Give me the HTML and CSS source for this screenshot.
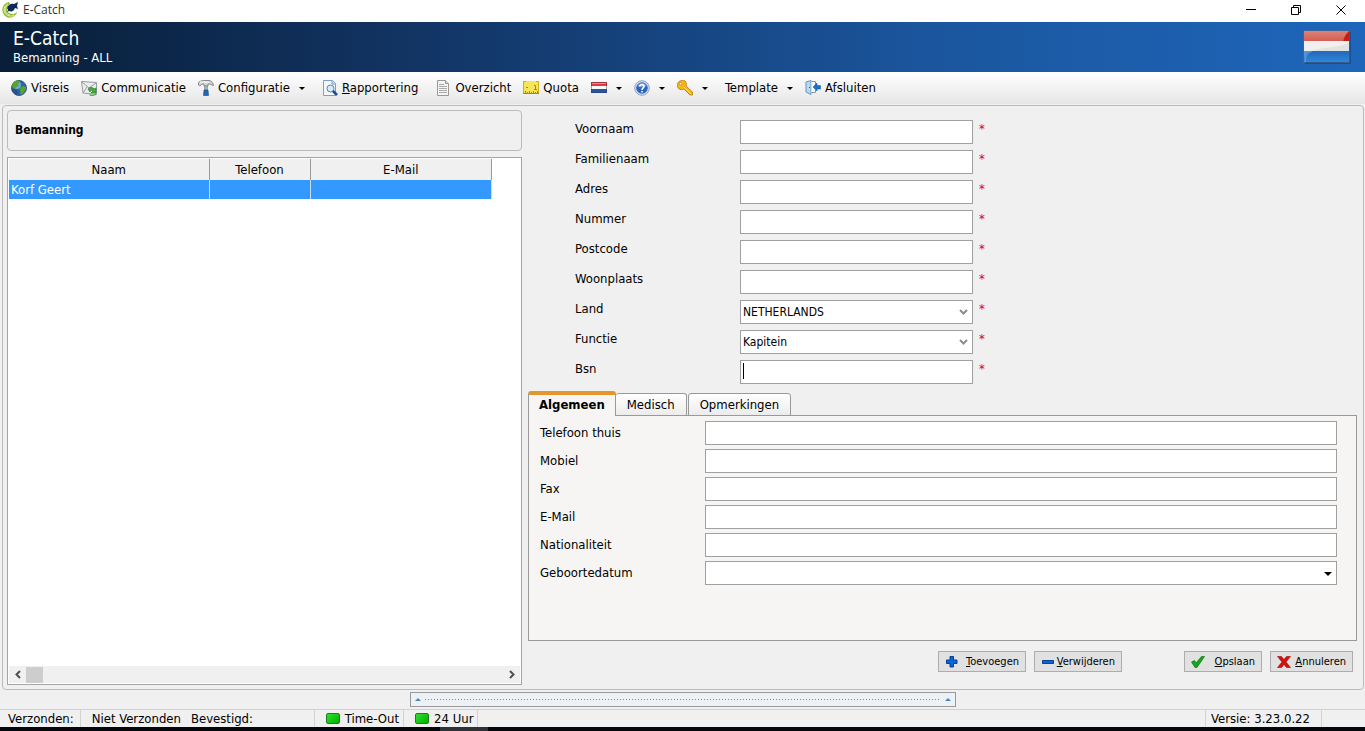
FILE: index.html
```
<!DOCTYPE html>
<html lang="nl">
<head>
<meta charset="utf-8">
<meta name="viewport" content="width=device-width, initial-scale=1">
<title>E-Catch</title>
<link rel="stylesheet" href="styles.css">
</head>
<body>
<div class="titlebar">
  <svg class="icon" viewBox="0 0 16 16"><path d="M7 0C2 1-1 6 1 11c2 5 8 6 11 3 2-1 3-3 3-4-2 2-5 3-8 1S4 4 8 2z" fill="#8dbb27"/><path d="M6 2C2 4 1 8 3 11c2 3 6 4 9 2M5 3C1 8 4 12 8 13" fill="none" stroke="#e8f2b8"/><path d="M5 6c1-3 4-5 7-4l4-2-1 4 1 3-3-1c-1 3-3 4-6 3L5 10l1-2z" fill="#10295c"/></svg>
  <span class="titlebar-text">E-Catch</span>
  <div class="window-buttons">
    <button aria-label="Minimaliseren"><svg viewBox="0 0 11 11"><path d="M0 4.500h10" /></svg></button>
    <button aria-label="Verkleinen"><svg viewBox="0 0 11 11"><path d="M.5 2.500h7v7H.5zM2.500 2.500V.5h7v7H7.500"/></svg></button>
    <button aria-label="Sluiten"><svg viewBox="0 0 11 11"><path d="M.5.5l9 9M9.500.5l-9 9"/></svg></button>
  </div>
</div>

<header class="banner">
  <div>
    <h1>E-Catch</h1>
    <p>Bemanning - ALL</p>
  </div>
  <svg class="banner-flag" viewBox="0 0 48 34">
    <defs>
      <linearGradient id="red" x2="0" y2="1"><stop stop-color="#dc8278"/><stop offset="1" stop-color="#d45a4e"/></linearGradient>
      <linearGradient id="blue" x2="0" y2="1"><stop stop-color="#2468b8"/><stop offset="1" stop-color="#2e86dd"/></linearGradient>
    </defs>
    <path d="M2 2h46v32H2z" fill="#123f7c" opacity=".6"/>
    <path d="M1 1h45v11H1z" fill="url(#red)"/><path d="M46 1v11h-6c1-5 3-8 6-11z" fill="#c5200f"/>
    <path d="M1 11h45v11H1z" fill="#f0f0f0"/><path d="M6 22c12-6 28-3 40-9v9z" fill="#e2e2e2"/>
    <path d="M1 21h45v11H1z" fill="url(#blue)"/><path d="M1 32c0-5 2-9 7-11H1z" fill="#5a94d0"/><path d="M2 32c0-5 2-9 7-11" fill="none" stroke="#86b8e8" stroke-width=".7"/>
    <path d="M.5.5h46v32H.5z" fill="none" stroke="#54687f" opacity=".5"/>
  </svg>
</header>

<nav class="toolbar">
  <button class="tool"><svg class="icon" viewBox="0 0 16 16"><circle cx="8" cy="8" r="7.500" fill="#2c63ad" stroke="#315887"/><circle cx="6" cy="5" r="4" fill="#70a7df"/><path d="M4 1c3-1 5 0 5 1L7 4l1 2-3 1-1 2-3-2C1 4 2 2 4 1zM9 8l3-2 3 1c0 4-2 6-5 8-1-1 0-3-1-4z" fill="#58a32b"/><path d="M3 9l3 1 1 3-1 2C4 14 2 12 1 9z" fill="#254f8f"/></svg>Visreis</button>
  <button class="tool"><svg class="icon" viewBox="0 0 16 16"><path d="M.5 1.500l15 1v12L2 13z" fill="#eceded" stroke="#989c9e"/><path d="M1 2l7 6 7-5M2 13l4-6M15 14L9 7" fill="none" stroke="#999da0"/><path d="M7 9c2-2 5-2 6 0l2-1v5h-5l2-2c-1-1-2-1-3 1z" fill="#45aa36" stroke="#247923" stroke-width=".6"/><path d="M8 13c2 3 5 2 7 0v2l-3 1H9z" fill="#50b23e"/></svg>Communicatie</button>
  <button class="tool"><svg class="icon" viewBox="0 0 16 16"><path d="M.5 2.500C3 0 7 .5 11 .5c2 0 4 2 4.500 5L12 4h-2v2H6V4H4L2 6 .5 5z" fill="#d5d8da" stroke="#84898c"/><path d="M2 2h9" stroke="#fff"/><path d="M6.500 6h3v5h-3z" fill="#a9afb3" stroke="#777e82" stroke-width=".5"/><path d="M6 10h4l.5 5.500h-5z" fill="#2268b5" stroke="#15447d" stroke-width=".6"/></svg>Configuratie<i class="arrow"></i></button>
  <button class="tool group-start"><svg class="icon" viewBox="0 0 16 16"><path d="M1.500.5h9l3 3v12h-12z" fill="#f4f8fc" stroke="#7c9fc4"/><path d="M10 .5v3.500h3.500" fill="#cedeef" stroke="#7c9fc4"/><circle cx="8.500" cy="8.500" r="3.500" fill="#d4edf7" stroke="#5b84a8"/><path d="M11 11l4 4" stroke="#18499a" stroke-width="2.500"/></svg><span><u>R</u>apportering</span></button>
  <button class="tool group-start"><svg class="icon" viewBox="0 0 16 16"><path d="M2.500.5h8l3 3v12h-11z" fill="#f5f5f5" stroke="#999"/><path d="M10.500.5v3h3" fill="#ddd" stroke="#999"/><path d="M4 4.500h5M4 6.500h8M4 8.500h8M4 10.500h8M4 12.500h8" stroke="#aaa"/></svg>Overzicht</button>
  <button class="tool"><svg class="icon" viewBox="0 0 16 16"><path d="M0 1h16v13H0z" fill="#f6e657"/><path d="M.5 1v13M15.500 1v13M0 1.500h3M13 1.500h3" stroke="#d1ad1d"/><path d="M0 13.500h16M2.500 11v3M4.500 12v2M6.500 11v3M8.500 12v2M10.500 11v3M12.500 12v2M14.500 11v3M3 7.500h2M11 5.500h1.500V9M11 9.500h3" fill="none" stroke="#a98a13"/></svg>Quota</button>
  <button class="tool" aria-label="Taal"><svg class="icon" viewBox="0 0 16 16"><path d="M0 2h16v4H0z" fill="#e5383c"/><path d="M1 3h14v1H1z" fill="#f28385"/><path d="M0 6h16v4H0z" fill="#f7f7f7"/><path d="M0 9h16v4H0z" fill="#2456a5"/><path d="M.5 2.500h15v10H.5z" fill="none" stroke="#3c3657" opacity=".45"/></svg><i class="arrow"></i></button>
  <button class="tool" aria-label="Help"><svg class="icon" viewBox="0 0 16 16"><circle cx="8" cy="8" r="7.300" fill="#d9e3f1" stroke="#8ba0bf"/><circle cx="8" cy="8" r="5.800" fill="#2e63be"/><path d="M3 6c2-4 8-4 10 0-3 1-6 2-10 0z" fill="#6c97dd"/><path d="M5.500 6.500C6 4 10 4 10 6.500 10 8 8 8 8 10M8 11v1.600" fill="none" stroke="#fff" stroke-width="1.600"/></svg><i class="arrow"></i></button>
  <button class="tool" aria-label="Sleutel"><svg class="icon" viewBox="0 0 16 16"><path d="M3 1C0 2 0 6 1 8c2 2 4 2 6 1l6 6h2.500v-3L9 6c1-2 0-4-1-5-2-1-3-1-5 0z" fill="#f6b51d" stroke="#bc7b0b" stroke-width=".8"/><circle cx="3.700" cy="3.700" r="1.300" fill="#fff" stroke="#b87a0e" stroke-width=".7"/><path d="M7 7l7 7" stroke="#fee184"/><path d="M9 11l1 1M11 13l1 1" stroke="#b87a0e"/></svg><i class="arrow"></i></button>
  <button class="tool group-start">Template<i class="arrow"></i></button>
  <button class="tool"><svg class="icon" viewBox="0 0 16 16"><path d="M1 2l5-1.500v14L1 12z" fill="#b9d8f2" stroke="#6797c2"/><path d="M6.500 1.500h4v11h-4" fill="#f7f9fb" stroke="#8296aa"/><path d="M4 7.500h1" stroke="#315e8c"/><path d="M8 7l4-4v2.500h3.500v3.500H12V11z" fill="#1672d2" stroke="#0f529f" stroke-width=".5"/></svg>Afsluiten</button>
</nav>

<main class="workspace">
  <section class="crew">
    <div class="crew-title"><h2>Bemanning</h2></div>
    <div class="crew-list">
      <table>
        <colgroup><col class="col-name"><col class="col-phone"><col class="col-mail"></colgroup>
        <thead><tr><th>Naam</th><th>Telefoon</th><th>E-Mail</th></tr></thead>
        <tbody><tr><td>Korf Geert</td><td></td><td></td></tr></tbody>
      </table>
      <div class="scrollbar">
        <button aria-label="Naar links"><svg viewBox="0 0 8 9"><path d="M6 1L2.500 4.500 6 8"/></svg></button>
        <div class="scroll-track"><div class="scroll-thumb"></div></div>
        <button aria-label="Naar rechts"><svg viewBox="0 0 8 9"><path d="M2 1l3.500 3.500L2 8"/></svg></button>
      </div>
    </div>
  </section>

  <form class="details">
    <div class="person">
      <div class="person-row"><label for="voornaam">Voornaam</label><input id="voornaam" type="text"><span class="required">*</span></div>
      <div class="person-row"><label for="familienaam">Familienaam</label><input id="familienaam" type="text"><span class="required">*</span></div>
      <div class="person-row"><label for="adres">Adres</label><input id="adres" type="text"><span class="required">*</span></div>
      <div class="person-row"><label for="nummer">Nummer</label><input id="nummer" type="text"><span class="required">*</span></div>
      <div class="person-row"><label for="postcode">Postcode</label><input id="postcode" type="text"><span class="required">*</span></div>
      <div class="person-row"><label for="woonplaats">Woonplaats</label><input id="woonplaats" type="text"><span class="required">*</span></div>
      <div class="person-row"><label for="land">Land</label><div class="combo"><select id="land"><option>NETHERLANDS</option></select><svg viewBox="0 0 9 6"><path d="M1 1l3.500 3.500L8 1"/></svg></div><span class="required">*</span></div>
      <div class="person-row"><label for="functie">Functie</label><div class="combo"><select id="functie"><option>Kapitein</option></select><svg viewBox="0 0 9 6"><path d="M1 1l3.500 3.500L8 1"/></svg></div><span class="required">*</span></div>
      <div class="person-row"><label for="bsn">Bsn</label><div class="combo caret"><input id="bsn" type="text"></div><span class="required">*</span></div>
    </div>

    <div class="tabs" role="tablist">
      <button type="button" class="tab active" role="tab" aria-selected="true">Algemeen</button>
      <button type="button" class="tab" role="tab">Medisch</button>
      <button type="button" class="tab" role="tab">Opmerkingen</button>
    </div>
    <div class="tab-panel" role="tabpanel">
      <label for="telefoon">Telefoon thuis</label><input id="telefoon" type="text">
      <label for="mobiel">Mobiel</label><input id="mobiel" type="text">
      <label for="fax">Fax</label><input id="fax" type="text">
      <label for="email">E-Mail</label><input id="email" type="text">
      <label for="nationaliteit">Nationaliteit</label><input id="nationaliteit" type="text">
      <label for="geboortedatum">Geboortedatum</label><div class="combo date"><select id="geboortedatum"><option></option></select><i class="arrow"></i></div>
    </div>

    <div class="actions">
      <button type="button" class="action wide"><svg viewBox="0 0 14 14"><path d="M5 1.500h3.500V5H12v3.500H8.500V12H5V8.500H1.500V5H5z" fill="#0866d8" stroke="#083f91"/></svg><span><u>T</u>oevoegen</span></button>
      <button type="button" class="action wide"><svg viewBox="0 0 14 14"><path d="M1.500 5.500h11v3h-11z" fill="#0866d8" stroke="#083f91"/></svg><span><u>V</u>erwijderen</span></button>
      <button type="button" class="action commit"><svg viewBox="0 0 14 14"><path d="M.5 7l3-1.500L5 8l5.500-6.500h3L6 12.500H4z" fill="#13a51a" stroke="#087711" stroke-width=".7"/></svg><span><u>O</u>pslaan</span></button>
      <button type="button" class="action"><svg viewBox="0 0 14 14"><path d="M.5 1.500h4L7 4.500l2.500-3h4L9 7l4.500 5.500h-4L7 9.500l-2.500 3h-4L5 7z" fill="#d5100d" stroke="#9d0907" stroke-width=".6"/></svg><span><u>A</u>nnuleren</span></button>
    </div>
  </form>
</main>

<div class="splitter-row"><div class="splitter"><i></i><span></span><i></i></div></div>

<footer class="status">
  <span class="cell">Verzonden:</span>
  <span class="cell sent"><span>Niet Verzonden</span><span>Bevestigd:</span></span>
  <span class="cell led">Time-Out</span>
  <span class="cell led">24 Uur</span>
  <span class="cell version">Versie: 3.23.0.22</span>
</footer>
<div class="taskbar"><div class="taskbar-item"></div></div>
</body>
</html>
```
FILE: styles.css
```
* { box-sizing: border-box; }

body {
  margin: 0;
  min-height: 100vh;
  display: flex;
  flex-direction: column;
  background: #f0f0f0;
  color: #000;
  font: 13px/18px "DejaVu Sans Condensed", "Noto Sans", sans-serif;
}

button, input, select { font: inherit; color: inherit; margin: 0; }
button { border: 0; background: none; padding: 0; }
h1, h2, p { margin: 0; }
.icon { width: 16px; height: 16px; flex: none; }
.arrow {
  width: 0;
  height: 0;
  border: 3px solid transparent;
  border-top: 3px solid #000;
  border-bottom: 0;
}

.titlebar {
  height: 22px;
  display: flex;
  align-items: center;
  padding: 0 18px 2px 2px;
  gap: 5px;
  background: #fff;
  flex: none;
}
.titlebar-text { font: 12px/16px "Open Sans", sans-serif; color: #333; }
.window-buttons { display: flex; gap: 34px; margin-left: auto; }
.window-buttons button { display: flex; }
.window-buttons svg { width: 11px; height: 11px; fill: none; stroke: #000; }

.banner {
  height: 50px;
  flex: none;
  display: flex;
  align-items: center;
  justify-content: space-between;
  padding: 0 14px 0 13px;
  color: #fff;
  background: linear-gradient(90deg, #081e38, #123463 30%, #1b57a0 70%, #1e66ba);
}
.banner h1 { font-size: 19px; line-height: 22px; font-weight: 400; }
.banner p { font-size: 13px; line-height: 18px; }
.banner-flag { width: 48px; height: 34px; }

.toolbar {
  height: 32px;
  flex: none;
  display: flex;
  align-items: center;
  gap: 12px;
  padding: 0 11px;
  background: linear-gradient(#fff, #e6e6e6);
}
.tool { display: flex; align-items: center; gap: 4px; white-space: nowrap; }
.tool .arrow { margin-left: 5px; }
.group-start { margin-left: 5px; }

.workspace {
  flex: 1;
  display: grid;
  grid-template-columns: minmax(0, 515fr) minmax(0, 829fr);
  gap: 6px;
  margin: 1px 1px 0 2px;
  padding: 4px 6px 4px 4px;
  border: 1px solid #bbb;
  border-radius: 4px;
}

.crew { display: flex; flex-direction: column; gap: 6px; }
.crew-title { padding: 10px 7px; border: 1px solid #bbb; border-radius: 4px; }
.crew-title h2 { font-size: 12px; line-height: 19px; }
.crew-list {
  flex: 1;
  display: flex;
  flex-direction: column;
  justify-content: space-between;
  padding: 1px;
  border: 1px solid #a5a5a5;
  background: #fff;
}
.crew-list table { width: 483px; table-layout: fixed; border-collapse: collapse; }
.col-name { width: 200px; }
.col-phone { width: 101px; }
.crew-list th {
  height: 21px;
  padding: 0;
  background: #f0f0f0;
  border-right: 1px solid #999;
  font-weight: 400;
}
.crew-list td {
  height: 19px;
  padding: 0 2px;
  background: #3399ff;
  color: #fff;
  border-right: 1px solid #c5dcf3;
}
.scrollbar { display: flex; align-items: center; height: 17px; background: #f0f0f0; }
.scrollbar button { width: 17px; height: 16px; display: flex; align-items: center; justify-content: center; }
.scrollbar svg { width: 8px; height: 9px; fill: none; stroke: #505050; stroke-width: 2; }
.scroll-track { flex: 1; }
.scroll-thumb { width: 17px; height: 16px; background: #cdcdcd; }

.details { display: flex; flex-direction: column; }
input, select {
  width: 100%;
  height: 24px;
  padding: 0 2px;
  border: 1px solid #a0a0a0;
  border-radius: 0;
  background: #fff;
  font-size: 12px;
  appearance: none;
}
.person { display: grid; gap: 6px; padding: 10px 0 0 47px; }
.person-row { display: grid; grid-template-columns: 165px 233px auto; align-items: start; }
.required { color: #e00000; padding-left: 6px; }
.combo { position: relative; display: flex; }
.combo svg {
  position: absolute;
  right: 5px;
  top: 9px;
  width: 9px;
  height: 6px;
  fill: none;
  stroke: #8c8c8c;
  stroke-width: 2;
  pointer-events: none;
}
.combo .arrow { position: absolute; right: 5px; top: 11px; border-width: 4px 4px 0; pointer-events: none; }
.caret::after { content: ""; position: absolute; left: 3px; top: 3px; width: 1px; height: 16px; background: #000; }

.tabs {
  display: flex;
  align-items: flex-end;
  margin-top: 7px;
  background: linear-gradient(#999, #999) 85px 100% / 100% 1px no-repeat;
}
.tab {
  height: 23px;
  padding: 0 11px;
  border: 1px solid #999;
  border-left-width: 0;
  border-radius: 3px 3px 0 0;
  background: linear-gradient(#fff, #ececec);
}
.tab + .tab + .tab { margin-left: 1px; border-left-width: 1px; }
.tab.active {
  height: 25px;
  padding: 0 10px 2px;
  border-left-width: 1px;
  border-top: 4px solid #e3972b;
  border-bottom: 0;
  background: #f6f5f4;
  font-weight: 700;
}
.tab-panel {
  flex: 1;
  display: grid;
  grid-template-columns: 165px minmax(0, 1fr);
  align-content: start;
  align-items: center;
  gap: 4px 0;
  padding: 5px 19px 5px 11px;
  border: 1px solid #999;
  border-top-width: 0;
  background: #f6f5f4;
}

.actions { display: flex; justify-content: flex-end; gap: 8px; padding: 10px 4px 13px; }
.action {
  display: flex;
  align-items: center;
  justify-content: space-between;
  width: 83px;
  height: 21px;
  padding: 0 6px;
  border: 1px solid #adadad;
  background: #e1e1e1;
  font-size: 11px;
}
.action svg { width: 14px; height: 14px; }
.action.wide { width: 88px; }
.action.commit { width: 78px; margin-left: 54px; }

.splitter-row { display: flex; justify-content: center; padding: 2px 0; }
.splitter {
  width: 40%;
  height: 15px;
  display: flex;
  align-items: center;
  gap: 4px;
  padding: 0 4px;
  border: 1px solid #999;
  background: #edf2f7;
}
.splitter i { border: 3px solid transparent; border-bottom-color: #4889c5; border-top: 0; }
.splitter span { flex: 1; height: 1px; background: repeating-linear-gradient(90deg, #4a94dc 0 1px, transparent 1px 3px); }

.status { display: flex; height: 18px; border-top: 1px solid #d2d2d2; }
.cell { display: flex; align-items: center; padding: 0 4px 0 11px; border-right: 1px solid #d2d2d2; white-space: nowrap; }
.cell:first-child { padding: 0 6px 0 8px; }
.sent { width: 234px; gap: 10px; }
.led { gap: 5px; }
.led::before {
  content: "";
  width: 12px;
  height: 9px;
  border: 1px solid #1a7f1a;
  border-radius: 2px;
  background: linear-gradient(135deg, #2fe02f, #00b000);
}
.version { margin-left: auto; margin-right: 43px; padding: 0 11px 0 5px; border-left: 1px solid #d2d2d2; }

.taskbar { height: 4px; background: #05070d; display: flex; }
.taskbar-item { width: 48px; margin-left: 440px; background: #2e3138; }
```
